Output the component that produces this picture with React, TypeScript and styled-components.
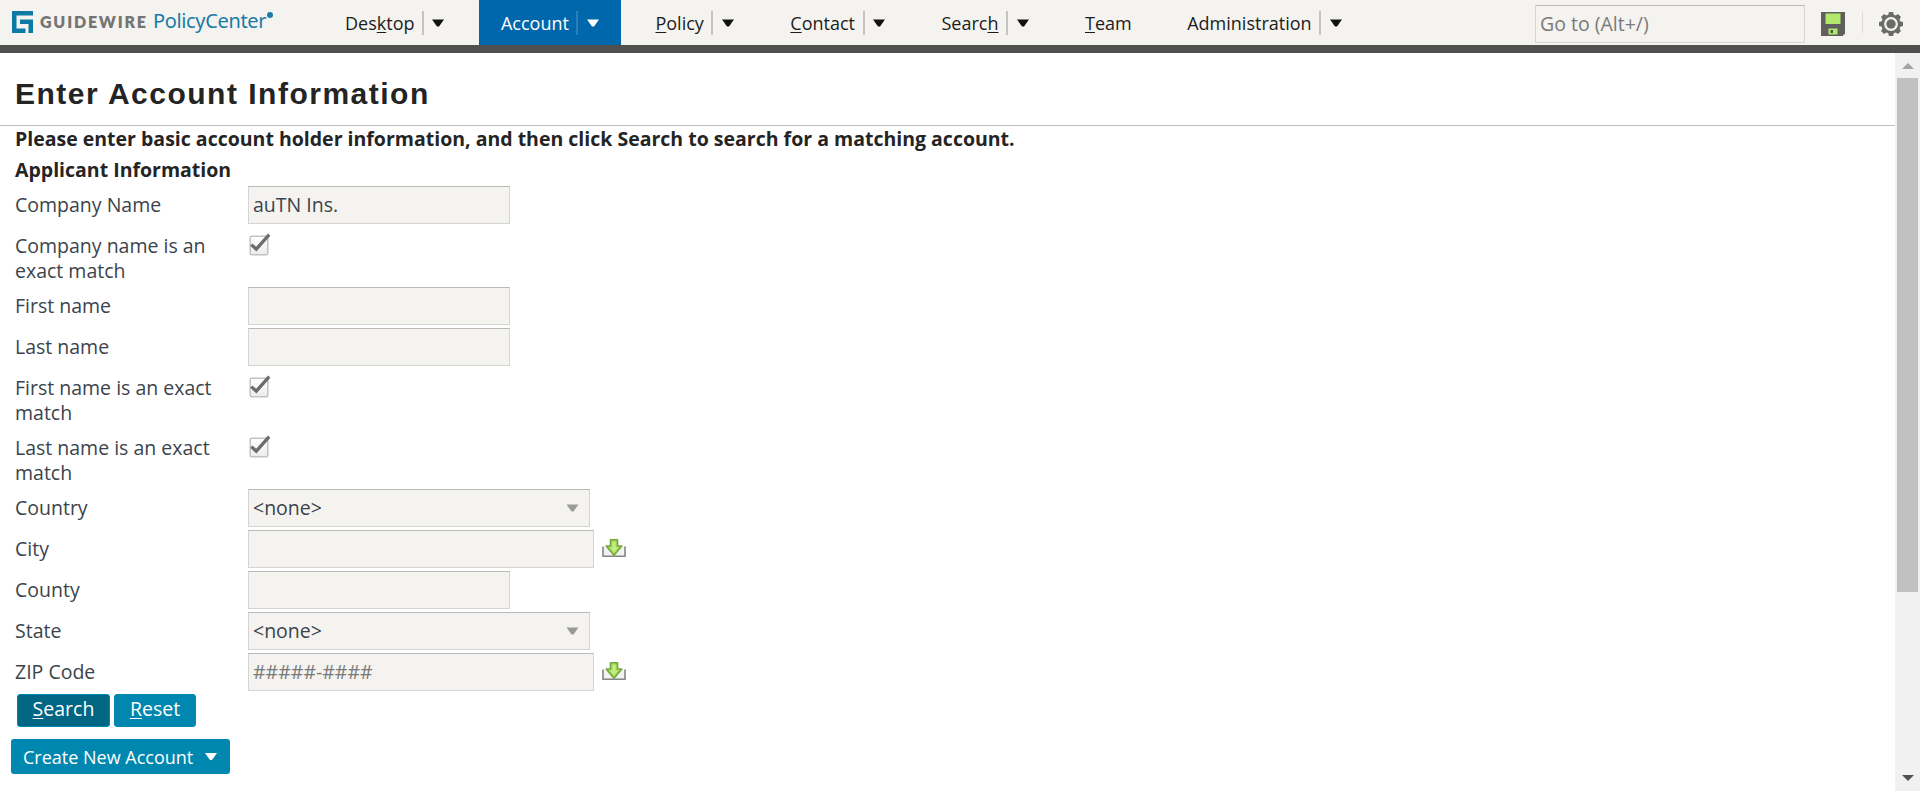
import React from 'react';
import styled, { createGlobalStyle } from 'styled-components';

const Global = createGlobalStyle`
  * { box-sizing: border-box; }
  html, body { margin: 0; padding: 0; overflow: hidden; }
  body { font-family: "Open Sans", "Noto Sans", sans-serif; font-size: 19.5px; color: #3b444c; background: #fff; }
  input, button { font-family: inherit; font-size: inherit; }
`;

const Page = styled.div`
  width: 1920px;
  height: 791px;
  display: flex;
  flex-direction: column;
`;

const TopBar = styled.header`
  height: 53px;
  flex: none;
  display: flex;
  background: #f4f3ef;
  border-bottom: 8px solid #505050;
`;

const Brand = styled.div`
  width: 323px;
  padding: 11px 0 0 12px;
  display: flex;
  align-items: flex-start;
`;

const BrandMark = styled.svg`
  display: block;
  flex: none;
`;

const Company = styled.span`
  margin-left: 6px;
  font: 800 16px/22px Lato, sans-serif;
  letter-spacing: 1.8px;
  color: #757472;
  width: 113px;
  white-space: nowrap;
`;

const Product = styled.span`
  font: 400 20px/20px "Noto Sans", sans-serif;
  letter-spacing: -0.35px;
  color: #1a7ba6;
  white-space: nowrap;
`;

const Dot = styled.span`
  width: 6px;
  height: 6px;
  margin: 1px 0 0 1px;
  border-radius: 50%;
  background: #1a7ba6;
`;

const Nav = styled.nav`
  display: flex;
  gap: 12.5px;
`;

const Tab = styled.a<{ $active?: boolean; $menu?: boolean }>`
  height: 45px;
  display: flex;
  align-items: center;
  padding: 0 ${p => (p.$menu ? 22 : 21)}px 0 22px;
  font-size: 18px;
  line-height: 24px;
  white-space: nowrap;
  color: ${p => (p.$active ? '#fff' : '#1c1c1c')};
  background: ${p => (p.$active ? '#0067ac' : 'transparent')};
`;

const TabText = styled.span`
  padding-top: 1px;
`;

const Key = styled.span`
  text-decoration: underline;
  text-decoration-thickness: 1px;
  text-underline-offset: 2px;
`;

const Divider = styled.span<{ $active?: boolean }>`
  width: 2px;
  height: 24px;
  margin: 1px 8.5px 0 7.5px;
  background: ${p => (p.$active ? '#2b7fb5' : '#c4c3c0')};
`;

const Tools = styled.div`
  margin-left: auto;
  display: flex;
  align-items: flex-start;
`;

const GoTo = styled.input`
  width: 270px;
  height: 38px;
  margin-top: 5px;
  padding: 0 4px 1px;
  border: 1px solid #d5d5d5;
  border-top-color: #bcbcbc;
  background: #f4f3ef;
  outline: none;
  &::placeholder { color: #7a7a7a; opacity: 1; }
`;

const ToolIcon = styled.svg<{ $left: number; $right: number }>`
  display: block;
  margin: 12px ${p => p.$right}px 0 ${p => p.$left}px;
`;

const ToolDivider = styled.span`
  width: 1px;
  height: 21px;
  margin-top: 12px;
  background: #dcdbd8;
`;

const Body = styled.div`
  flex: 1;
  display: flex;
  min-height: 0;
`;

const Content = styled.main`
  flex: 1;
`;

const Title = styled.h1`
  margin: 0;
  height: 73px;
  padding: 23px 0 0 15px;
  border-bottom: 1px solid #c0c0c0;
  font: 700 30px/36px "Liberation Sans", sans-serif;
  letter-spacing: 1.5px;
  color: #242424;
`;

const Heading = styled.p`
  margin: 0;
  padding: 0 0 0 15px;
  height: 31px;
  font-weight: 700;
  line-height: 26px;
  color: #242424;
`;

const SubHeading = styled(Heading)`
  height: 29px;
`;

const Form = styled.div`
  display: flex;
  flex-direction: column;
`;

const Row = styled.div<{ $tall?: boolean }>`
  height: ${p => (p.$tall ? 60 : 41)}px;
  display: flex;
  align-items: flex-start;
  padding-left: 15px;
`;

const Label = styled.label`
  width: 233px;
  padding: 6px 25px 0 0;
  line-height: 25px;
`;

const Field = styled.input<{ $wide?: boolean }>`
  width: ${p => (p.$wide ? 346 : 262)}px;
  height: 38px;
  padding: 0 4px 2px;
  border: 1px solid #d4d4d4;
  border-top-color: #b9b9b9;
  background: #f4f3ef;
  color: #3b444c;
  outline: none;
  &::placeholder { color: #7a7a7a; opacity: 1; }
`;

const Select = styled.div`
  width: 342px;
  height: 38px;
  padding: 0 10px 1px 4px;
  display: flex;
  align-items: center;
  justify-content: space-between;
  border: 1px solid #d4d4d4;
  border-top-color: #b9b9b9;
  background: #f4f3ef;
`;

const CheckIcon = styled.svg`
  display: block;
  margin-top: 6px;
`;

const PickerIcon = styled.svg`
  display: block;
  margin: 8px 0 0 8px;
`;

const Buttons = styled.div`
  display: flex;
  gap: 4px;
  padding-left: 17px;
`;

const Button = styled.button<{ $w: number; $dark?: boolean }>`
  width: ${p => p.$w}px;
  height: 33px;
  padding: 0 0 3px;
  border: 1px solid #0087af;
  border-radius: 3px;
  background: ${p => (p.$dark ? '#006684' : '#0087af')};
  color: #fff;
  line-height: 28px;
`;

const MenuButton = styled.button`
  width: 219px;
  height: 35px;
  margin: 12px 0 0 11px;
  padding: 0 13px 0 12px;
  display: flex;
  align-items: center;
  justify-content: space-between;
  border: 0;
  border-radius: 3px;
  background: #0087af;
  color: #fff;
  font-size: 18px;
  white-space: nowrap;
`;

const ScrollBar = styled.aside`
  width: 25px;
  padding: 10px 2px 10px;
  display: flex;
  flex-direction: column;
  align-items: center;
  background: #f1f1f1;
`;

const Thumb = styled.div`
  width: 21px;
  height: 514px;
  margin: 9px 0 auto;
  background: #c1c1c1;
`;

const Caret = ({ color = '#111', w = 12, h = 8 }: { color?: string; w?: number; h?: number }) => (
  <svg width={w} height={h} viewBox="0 0 12 8"><path d="M0 0.5h12L7 7.5H5z" fill={color} /></svg>
);

const Check = () => (
  <CheckIcon width="23" height="24" viewBox="0 0 23 24">
    <defs>
      <linearGradient id="box" x1="0" y1="0" x2="0" y2="1">
        <stop offset="0" stopColor="#fff" /><stop offset="1" stopColor="#ececec" />
      </linearGradient>
    </defs>
    <rect x="2.200" y="3.200" width="17.600" height="18.500" rx="1.500" fill="url(#box)" stroke="#c2c2c2" strokeWidth="1.500" />
    <path d="M3.300 11.600l5 4.600L21.200 1.600" fill="none" stroke="#6c6c6c" strokeWidth="3.300" />
  </CheckIcon>
);

const Picker = () => (
  <PickerIcon width="24" height="22" viewBox="0 0 24 22">
    <path d="M1 8.500v9.700h22V8.500" fill="#f2f2f2" stroke="#858585" strokeWidth="1.600" />
    <path d="M8.500 1.700h7v6.300h4.300L12 17.300 4.200 8h4.300z" fill="#a9dc62" stroke="#74a83c" strokeWidth="1.600" strokeLinejoin="round" />
    <path d="M10.500 4h3v5.500H16L12 14.500 8 9.500h2.500z" fill="#c4ee80" />
  </PickerIcon>
);

interface TabData { before: string; key?: string; after?: string; active?: boolean; menu?: boolean }

const tabs: TabData[] = [
  { before: 'Des', key: 'k', after: 'top', menu: true },
  { before: 'Account', active: true, menu: true },
  { before: '', key: 'P', after: 'olicy', menu: true },
  { before: '', key: 'C', after: 'ontact', menu: true },
  { before: 'Searc', key: 'h', menu: true },
  { before: '', key: 'T', after: 'eam' },
  { before: 'Administration', menu: true },
];

interface RowData { label: string; kind: 'text' | 'check' | 'select' | 'picker'; value?: string; hint?: string }

const rows: RowData[] = [
  { label: 'Company Name', kind: 'text', value: 'auTN Ins.' },
  { label: 'Company name is an exact match', kind: 'check' },
  { label: 'First name', kind: 'text' },
  { label: 'Last name', kind: 'text' },
  { label: 'First name is an exact match', kind: 'check' },
  { label: 'Last name is an exact match', kind: 'check' },
  { label: 'Country', kind: 'select', value: '<none>' },
  { label: 'City', kind: 'picker' },
  { label: 'County', kind: 'text' },
  { label: 'State', kind: 'select', value: '<none>' },
  { label: 'ZIP Code', kind: 'picker', hint: '#####-####' },
];

const FormRow = ({ row }: { row: RowData }) => (
  <Row $tall={row.kind === 'check'}>
    <Label>{row.label}</Label>
    {row.kind === 'text' && <Field defaultValue={row.value} />}
    {row.kind === 'check' && <Check />}
    {row.kind === 'select' && <Select><span>{row.value}</span><Caret color="#9a9a9a" w={13} h={8} /></Select>}
    {row.kind === 'picker' && <><Field $wide placeholder={row.hint} /><Picker /></>}
  </Row>
);

export default function App() {
  return (
    <Page>
      <Global />
      <TopBar>
        <Brand>
          <BrandMark width="22" height="22" viewBox="0 0 22 22">
            <path d="M0 0h21v4.500H4.500V17.500H13.500V22H0zM8 8.500h13V22h-4.500V13H8z" fill="#0b7ba5" />
          </BrandMark>
          <Company>GUIDEWIRE</Company>
          <Product>PolicyCenter</Product>
          <Dot />
        </Brand>
        <Nav>
          {tabs.map(t => (
            <Tab key={t.before + t.key} $active={t.active} $menu={t.menu}>
              <TabText>{t.before}{t.key && <Key>{t.key}</Key>}{t.after}</TabText>
              {t.menu && <><Divider $active={t.active} /><Caret color={t.active ? '#fff' : '#111'} /></>}
            </Tab>
          ))}
        </Nav>
        <Tools>
          <GoTo placeholder="Go to (Alt+/)" />
          <ToolIcon $left={16} $right={17} width="24" height="24" viewBox="0 0 24 24">
            <path d="M0 0h24v21.500L21.500 24H0z" fill="#5f5f5d" />
            <path d="M4.500 1.500h15v10.500h-15zM7.500 16.500h9v6h-9z" fill="#b2e86b" />
            <path d="M9.500 18h2.500v3H9.500z" fill="#50504e" />
          </ToolIcon>
          <ToolDivider />
          <ToolIcon $left={16} $right={17} width="24" height="24" viewBox="0 0 24 24">
            <g fill="#6b6b69">
              {[0, 45, 90, 135, 180, 225, 270, 315].map(a => (
                <path key={a} d="M9 4L9.900 0h4.200l.9 4z" transform={`rotate(${a} 12 12)`} />
              ))}
              <circle cx="12" cy="12" r="4.700" />
            </g>
            <circle cx="12" cy="12" r="8.300" fill="none" stroke="#6b6b69" strokeWidth="2.800" />
          </ToolIcon>
        </Tools>
      </TopBar>
      <Body>
        <Content>
          <Title>Enter Account Information</Title>
          <Heading>Please enter basic account holder information, and then click Search to search for a matching account.</Heading>
          <SubHeading>Applicant Information</SubHeading>
          <Form>{rows.map(r => <FormRow key={r.label} row={r} />)}</Form>
          <Buttons>
            <Button $w={93} $dark><Key>S</Key>earch</Button>
            <Button $w={82}><Key>R</Key>eset</Button>
          </Buttons>
          <MenuButton>Create New Account<Caret color="#fff" w={12} h={9} /></MenuButton>
        </Content>
        <ScrollBar>
          <svg width="12" height="6" viewBox="0 0 12 6"><path d="M0 6L6 0l6 6z" fill="#a3a3a3" /></svg>
          <Thumb />
          <svg width="12" height="6" viewBox="0 0 12 6"><path d="M0 0h12L6 6z" fill="#505050" /></svg>
        </ScrollBar>
      </Body>
    </Page>
  );
}
